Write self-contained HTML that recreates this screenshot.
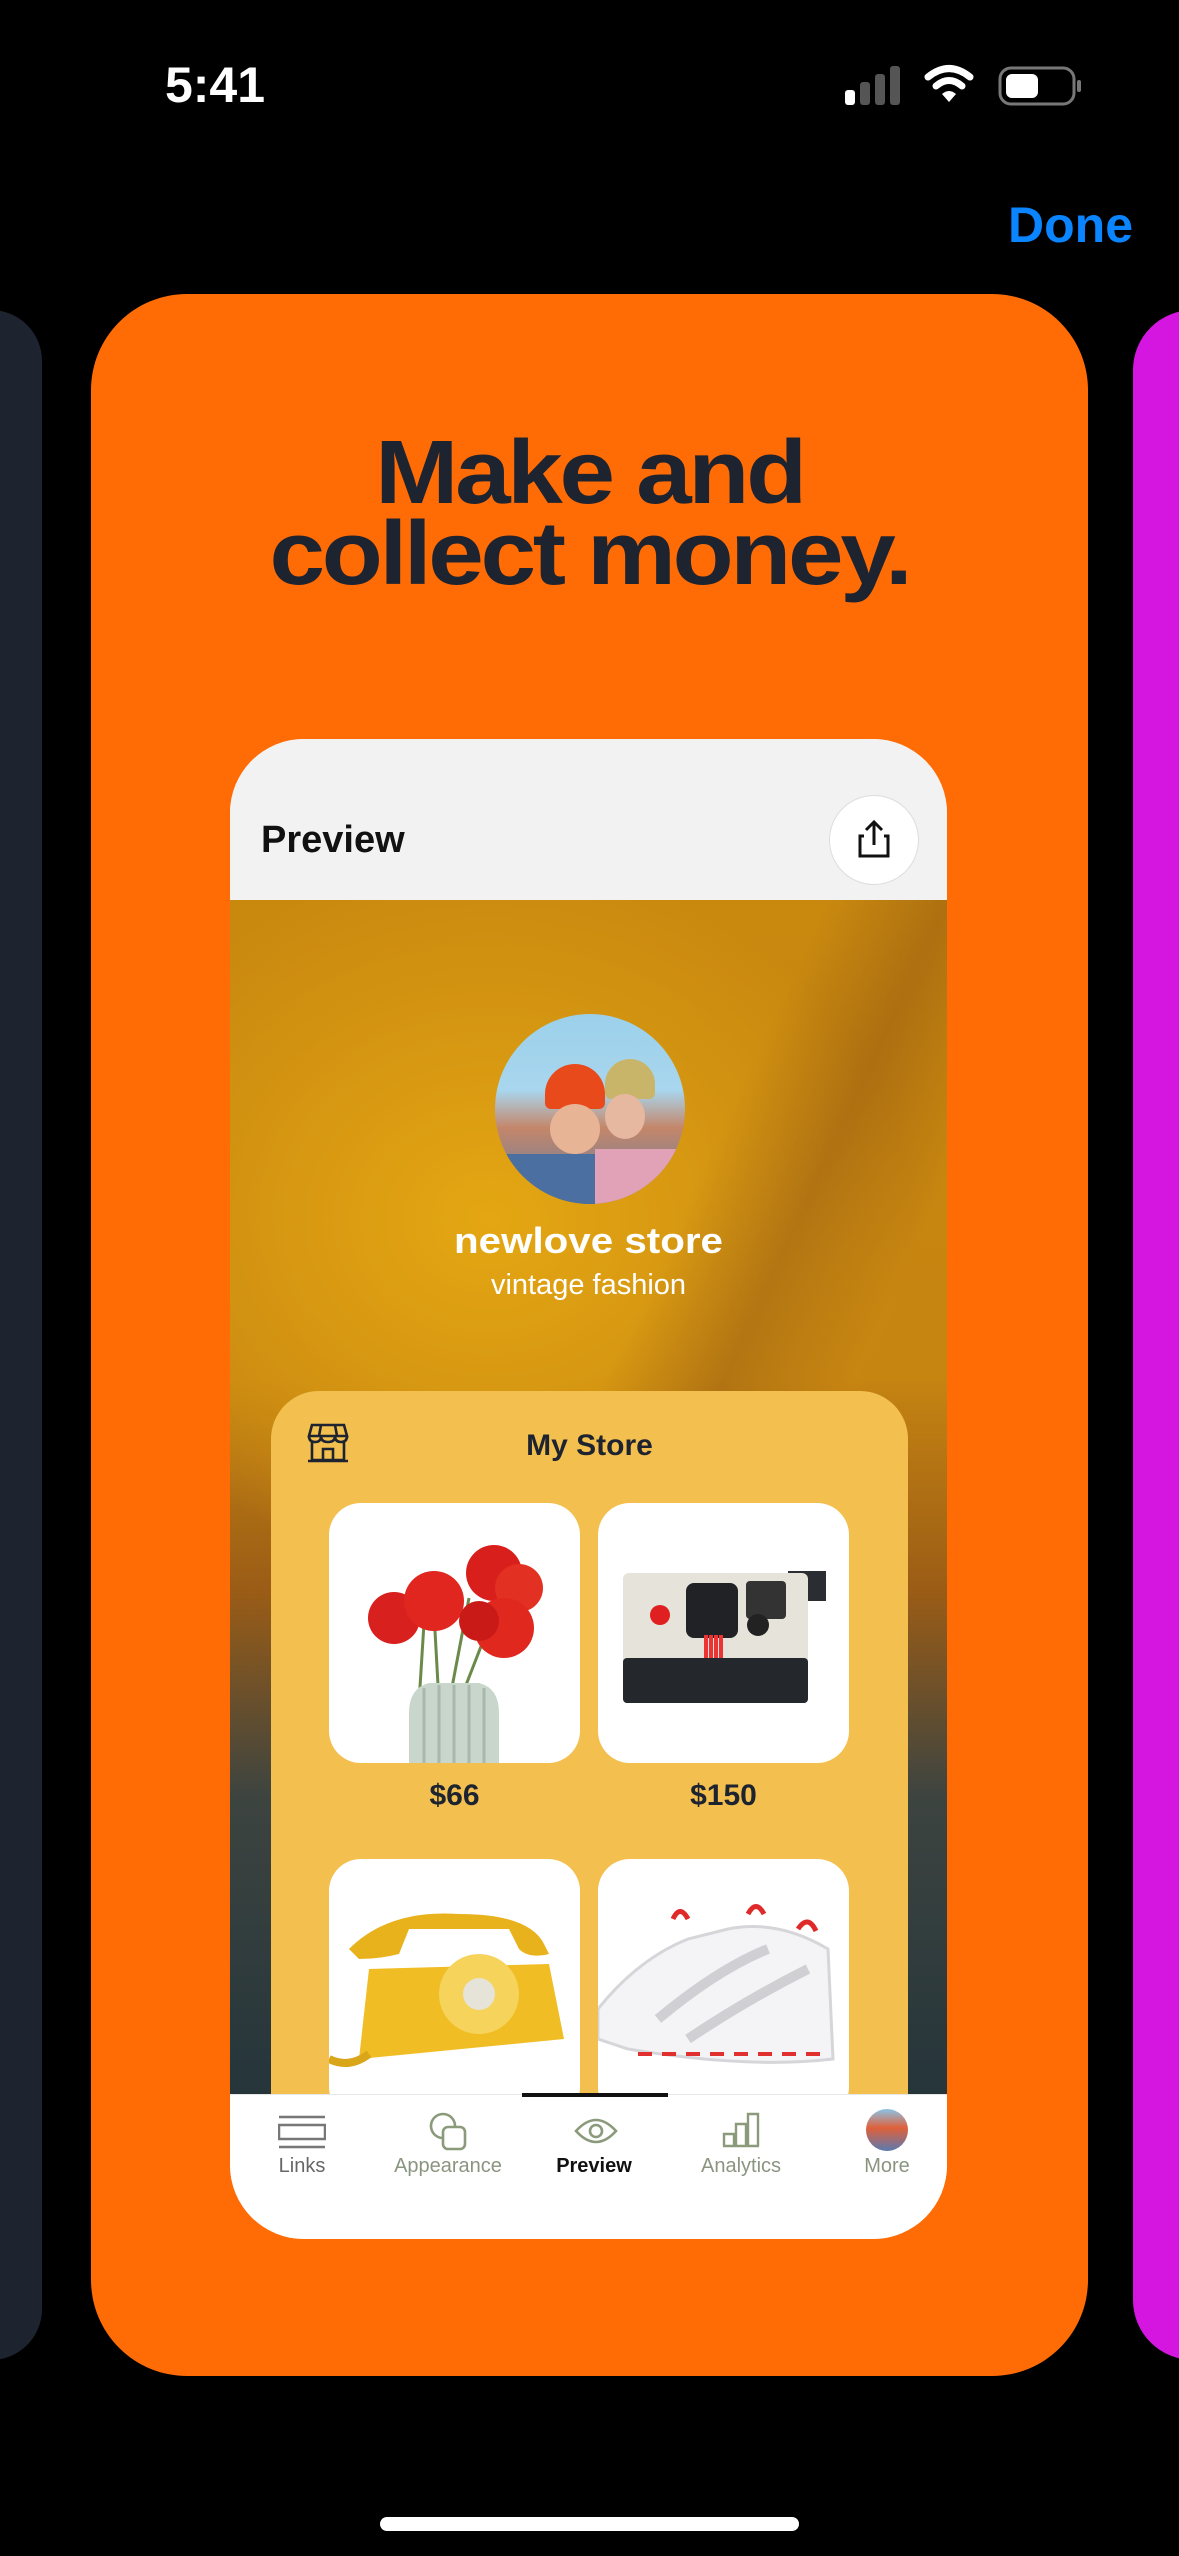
<!DOCTYPE html>
<html><head><meta charset="utf-8"><style>
*{margin:0;padding:0;box-sizing:border-box}
body{width:1179px;height:2556px;background:#000;position:relative;overflow:hidden;font-family:"Liberation Sans",sans-serif}
.abs{position:absolute}
</style></head><body>
<div class="abs" style="left:215px;top:56px;font-size:50px;color:#fff;font-weight:600;transform:translateX(-50%)">5:41</div>
<svg class="abs" style="left:840px;top:64px" width="245" height="46" viewBox="0 0 245 46">
<rect x="5" y="26" width="10" height="15" rx="3" fill="#fff"/>
<rect x="20" y="18" width="10" height="23" rx="3" fill="#555"/>
<rect x="35" y="10" width="10" height="31" rx="3" fill="#555"/>
<rect x="50" y="2" width="10" height="39" rx="3" fill="#555"/>
<path d="M88 13 Q109 -4 130 13" stroke="#fff" stroke-width="7" fill="none" stroke-linecap="round"/>
<path d="M96 22 Q109 11 122 22" stroke="#fff" stroke-width="7" fill="none" stroke-linecap="round"/>
<path d="M102 30 L109 38 L116 30 Q109 24 102 30Z" fill="#fff"/>
<rect x="160" y="4" width="74" height="36" rx="11" fill="none" stroke="#777" stroke-width="3"/>
<rect x="166" y="10" width="32" height="24" rx="6" fill="#fff"/>
<rect x="237" y="16" width="4" height="12" rx="2" fill="#777"/>
</svg>
<div class="abs" style="left:1008px;top:196px;font-size:50px;color:#0a84ff;font-weight:600">Done</div>

<div class="abs" style="left:-60px;top:310px;width:102px;height:2050px;background:#1e2330;border-radius:60px"></div>
<div class="abs" style="left:1133px;top:310px;width:120px;height:2050px;background:#d516e0;border-radius:60px"></div>

<div class="abs" style="left:91px;top:294px;width:997px;height:2082px;background:#ff6c06;border-radius:96px"></div>
<div class="abs" style="left:91px;top:433px;width:997px;text-align:center;font-size:90px;line-height:81px;font-weight:900;color:#1e2330;letter-spacing:-3px;transform:scaleX(1.11)">Make and<br>collect money.</div>

<div class="abs" style="left:230px;top:739px;width:717px;height:1500px;border-radius:74px;overflow:hidden;background:#fff">
  <div class="abs" style="left:0;top:0;width:717px;height:161px;background:#f2f2f2"></div>
  <div class="abs" style="left:31px;top:80px;font-size:38px;font-weight:700;color:#111">Preview</div>
  <div class="abs" style="left:599px;top:56px;width:90px;height:90px;border-radius:50%;background:#fff;border:1px solid #ddd"></div>
  <svg class="abs" style="left:626px;top:80px" width="36" height="40" viewBox="0 0 36 40"><path d="M18 3V26M10 11L18 3L26 11M8 17H4V37H32V17H28" stroke="#111" stroke-width="3" fill="none"/></svg>
  <div class="abs" style="left:0;top:161px;width:717px;height:1195px;background:radial-gradient(ellipse 420px 360px at 260px 320px,#e4a712 0%,#d89912 45%,rgba(200,130,20,0) 100%),linear-gradient(180deg,#c9890f 0%,#c68411 40%,#9a5c16 58%,#3d4440 75%,#25353a 100%)"></div>
  <div class="abs" style="left:0;top:161px;width:717px;height:600px;background:linear-gradient(115deg,rgba(120,60,20,0) 60%,rgba(110,55,20,.3) 72%,rgba(120,60,20,0) 85%)"></div>
  <div class="abs" style="left:265px;top:275px;width:190px;height:190px;border-radius:50%;overflow:hidden;background:linear-gradient(180deg,#9cd0ea 0%,#a8d6ee 40%,#c4866a 60%,#5a7fa8 100%)">
    <div class="abs" style="left:50px;top:50px;width:60px;height:45px;border-radius:30px 30px 6px 6px;background:#e94a1c"></div>
    <div class="abs" style="left:110px;top:45px;width:50px;height:40px;border-radius:25px 25px 6px 6px;background:#c9b56a"></div>
    <div class="abs" style="left:55px;top:90px;width:50px;height:50px;border-radius:50%;background:#e8b496"></div>
    <div class="abs" style="left:110px;top:80px;width:40px;height:45px;border-radius:50%;background:#e6b8a0"></div>
    <div class="abs" style="left:10px;top:140px;width:90px;height:60px;background:#4a6fa0"></div>
    <div class="abs" style="left:100px;top:135px;width:90px;height:60px;background:#e1a1b6"></div>
  </div>
  <div class="abs" style="left:0;top:481px;width:717px;text-align:center;font-size:36px;font-weight:900;color:#fff;transform:scaleX(1.12)">newlove store</div>
  <div class="abs" style="left:0;top:530px;width:717px;text-align:center;font-size:29px;color:#fff">vintage fashion</div>

  <div class="abs" style="left:41px;top:652px;width:637px;height:900px;background:#f3c04f;border-radius:48px">
    <svg class="abs" style="left:36px;top:32px" width="42" height="40" viewBox="0 0 42 40"><path d="M5 2H37L40 13H2Z M2 13Q2 19 8 19Q14 19 14 13Q14 19 21 19Q28 19 28 13Q28 19 34 19Q40 19 40 13 M5 19V37H37V19 M16 37V26H26V37 M1 38H41 M14 2L12 13M28 2L30 13" stroke="#1e2330" stroke-width="2.6" fill="none"/></svg>
    <div class="abs" style="left:0;top:38px;width:637px;text-align:center;font-size:30px;font-weight:600;color:#1e2330">My Store</div>
    <div class="abs" style="left:58px;top:112px;width:251px;height:260px;background:#fff;border-radius:32px;overflow:hidden">
      <svg width="251" height="260" viewBox="0 0 251 260">
        <path d="M90 200L95 120M110 200L105 110M120 200L140 95M130 200L165 110" stroke="#6a8a4a" stroke-width="3"/>
        <circle cx="65" cy="115" r="26" fill="#d8211f"/><circle cx="105" cy="98" r="30" fill="#e0261e"/>
        <circle cx="165" cy="70" r="28" fill="#d91f1c"/><circle cx="190" cy="85" r="24" fill="#e23022"/>
        <circle cx="175" cy="125" r="30" fill="#e0281f"/><circle cx="150" cy="118" r="20" fill="#c91a18"/>
        <path d="M80 260V210Q80 185 100 180H150Q170 185 170 210V260Z" fill="#c9d6cc"/>
        <path d="M95 185V260M110 182V260M125 182V260M140 182V260M155 185V260" stroke="#a8b8ac" stroke-width="3"/>
      </svg>
    </div>
    <div class="abs" style="left:327px;top:112px;width:251px;height:260px;background:#fff;border-radius:32px;overflow:hidden">
      <svg width="251" height="260" viewBox="0 0 251 260">
        <path d="M190 68H228V98H210L205 190H190Z" fill="#2a2d31"/>
        <rect x="25" y="70" width="185" height="95" rx="6" fill="#e5e3da"/>
        <rect x="88" y="80" width="52" height="55" rx="8" fill="#202226"/>
        <rect x="148" y="78" width="40" height="38" rx="4" fill="#333"/>
        <circle cx="62" cy="112" r="10" fill="#e02020"/><circle cx="160" cy="122" r="11" fill="#222"/>
        <rect x="25" y="155" width="185" height="45" rx="4" fill="#24272b"/>
        <path d="M108 132V155M113 132V155M118 132V155M123 132V155" stroke-width="4" stroke="#e33"/>
      </svg>
    </div>
    <div class="abs" style="left:58px;top:388px;width:251px;text-align:center;font-size:30px;font-weight:600;color:#1e2330">$66</div>
    <div class="abs" style="left:327px;top:388px;width:251px;text-align:center;font-size:30px;font-weight:600;color:#1e2330">$150</div>
    <div class="abs" style="left:58px;top:468px;width:251px;height:260px;background:#fff;border-radius:32px;overflow:hidden">
      <svg width="251" height="260" viewBox="0 0 251 260">
        <path d="M20 90Q60 50 130 55Q200 55 215 85L220 95Q200 100 190 90L180 70H80L70 95Q50 100 30 100Z" fill="#e8b21c"/>
        <path d="M40 110L220 105L235 180L30 200Z" fill="#f0bd24"/>
        <circle cx="150" cy="135" r="40" fill="#f6d35a"/><circle cx="150" cy="135" r="16" fill="#e6e3d8"/>
        <path d="M0 200Q20 210 40 195" stroke="#d9a61a" stroke-width="8" fill="none"/>
      </svg>
    </div>
    <div class="abs" style="left:327px;top:468px;width:251px;height:260px;background:#fff;border-radius:32px;overflow:hidden">
      <svg width="251" height="260" viewBox="0 0 251 260">
        <path d="M0 150Q40 100 90 80L130 70Q180 60 230 90L235 200Q150 210 30 190L0 180Z" fill="#f4f4f6" stroke="#d6d6da" stroke-width="3"/>
        <path d="M60 160Q120 110 170 90M90 180Q150 140 210 110" stroke="#cfcfd4" stroke-width="10" fill="none"/>
        <path d="M75 60Q82 45 90 60M150 55Q158 40 166 55M200 70Q210 55 218 72" stroke="#e02a2a" stroke-width="5" fill="none"/>
        <path d="M40 195H230" stroke="#e03030" stroke-width="4" stroke-dasharray="14 10"/>
      </svg>
    </div>
  </div>

  <div class="abs" style="left:0;top:1355px;width:717px;height:145px;background:#fff;border-top:1px solid #e6e6e6"></div>
  <div class="abs" style="left:292px;top:1354px;width:146px;height:4px;background:#111"></div>
  <svg class="abs" style="left:48px;top:1376px" width="48" height="34" viewBox="0 0 48 34"><path d="M1 2H47M1 32H47" stroke="#777" stroke-width="2.5"/><rect x="1" y="10" width="46" height="14" fill="none" stroke="#777" stroke-width="2.5"/></svg>
  <svg class="abs" style="left:198px;top:1372px" width="40" height="40" viewBox="0 0 40 40"><circle cx="15" cy="15" r="12" fill="none" stroke="#8a9a7a" stroke-width="2.6"/><rect x="15" y="16" width="22" height="22" rx="5" fill="#fff" stroke="#8a9a7a" stroke-width="2.6"/></svg>
  <svg class="abs" style="left:344px;top:1378px" width="44" height="28" viewBox="0 0 44 28"><path d="M2 14Q22 -8 42 14Q22 36 2 14Z" fill="none" stroke="#8a9a7a" stroke-width="2.6"/><circle cx="22" cy="14" r="6" fill="none" stroke="#8a9a7a" stroke-width="2.6"/></svg>
  <svg class="abs" style="left:491px;top:1373px" width="40" height="36" viewBox="0 0 40 36"><path d="M2 34H38M3 34V22H13V34M15 34V12H25V34M27 34V2H37V34" fill="none" stroke="#8a9a7a" stroke-width="2.4"/></svg>
  <div class="abs" style="left:636px;top:1370px;width:42px;height:42px;border-radius:50%;background:linear-gradient(180deg,#8ac4e6 0%,#e0603a 45%,#5a7ab0 100%)"></div>
  <div class="abs" style="left:22px;top:1416px;width:100px;text-align:center;font-size:20px;color:#666">Links</div>
  <div class="abs" style="left:148px;top:1416px;width:140px;text-align:center;font-size:20px;color:#8a9580">Appearance</div>
  <div class="abs" style="left:314px;top:1416px;width:100px;text-align:center;font-size:20px;color:#111;font-weight:600">Preview</div>
  <div class="abs" style="left:451px;top:1416px;width:120px;text-align:center;font-size:20px;color:#8a9580">Analytics</div>
  <div class="abs" style="left:607px;top:1416px;width:100px;text-align:center;font-size:20px;color:#8a9580">More</div>
</div>

<div class="abs" style="left:380px;top:2517px;width:419px;height:14px;background:#fff;border-radius:7px"></div>
</body></html>
